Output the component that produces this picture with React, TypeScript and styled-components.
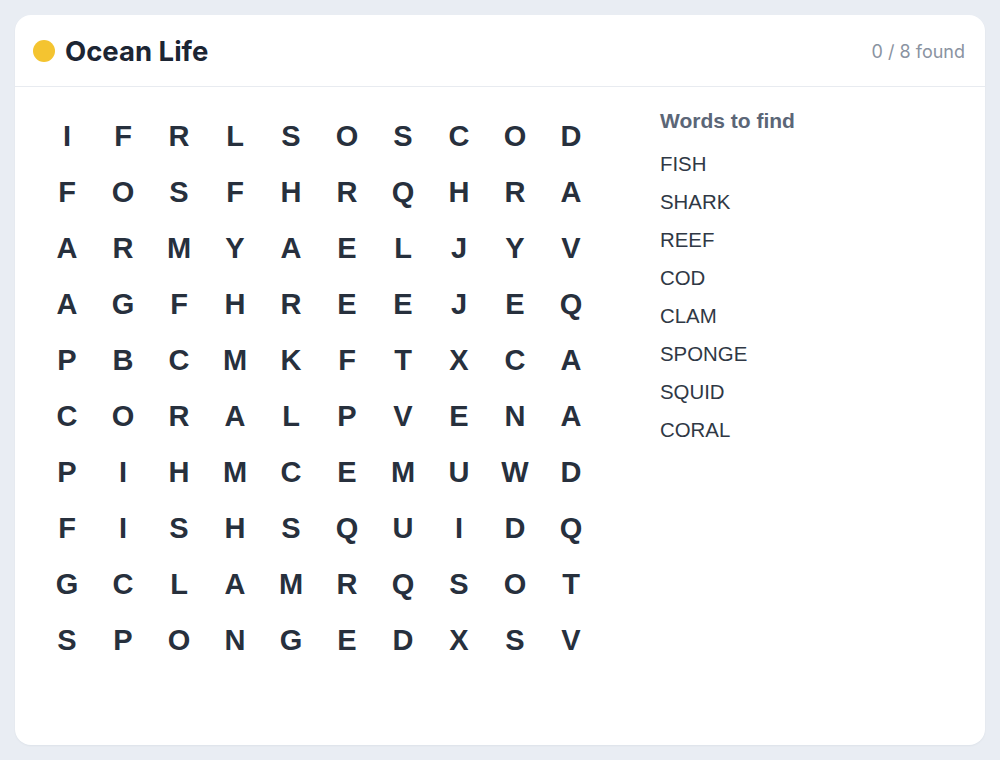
import styled, {createGlobalStyle} from 'styled-components';

const GlobalStyle = createGlobalStyle`
  html, body {
    margin: 0;
    padding: 0;
    background: #e9edf3;
    font-family: "Liberation Sans", Arial, sans-serif;
  }
`;

const grid = [
    'IFRLSOSCOD',
    'FOSFHRQHRA',
    'ARMYAELJYV',
    'AGFHREEJEQ',
    'PBCMKFTXCA',
    'CORALPVENA',
    'PIHMCEMUWD',
    'FISHSQUIDQ',
    'GCLAMRQSOT',
    'SPONGEDXSV',
];

const words = ['FISH', 'SHARK', 'REEF', 'COD', 'CLAM', 'SPONGE', 'SQUID', 'CORAL'];

export default function App() {
    return (
        <>
            <GlobalStyle/>
            <Page>
                <Card>
                    <Header>
                        <Title>
                            <Dot/>
                            Ocean Life
                        </Title>
                        <Counter>0 / {words.length} found</Counter>
                    </Header>
                    <Body>
                        <Grid>
                            {grid.map((row, r) =>
                                row.split('').map((ch, c) => <Cell key={`${r}-${c}`}>{ch}</Cell>)
                            )}
                        </Grid>
                        <Sidebar>
                            <SideTitle>Words to find</SideTitle>
                            <WordList>
                                {words.map(w => <Word key={w}>{w}</Word>)}
                            </WordList>
                        </Sidebar>
                    </Body>
                </Card>
            </Page>
        </>
    );
}

const Page = styled.div`
  padding: 15px;
  height: 760px;
  box-sizing: border-box;
`;

const Card = styled.div`
  background: #ffffff;
  border-radius: 16px;
  height: 730px;
  width: 970px;
  box-shadow: 0 1px 2px rgba(20, 30, 50, 0.05);
  overflow: hidden;
`;

const Header = styled.div`
  display: flex;
  align-items: center;
  justify-content: space-between;
  height: 71px;
  padding: 0 20px 0 18px;
  border-bottom: 1px solid #e8ebf0;
`;

const Title = styled.div`
  display: flex;
  align-items: center;
  gap: 10px;
  font-family: Inter, "Liberation Sans", sans-serif;
  font-weight: 700;
  font-size: 27.5px;
  color: #1c2533;
`;

const Dot = styled.span`
  width: 22px;
  height: 22px;
  border-radius: 50%;
  background: #f4c430;
`;

const Counter = styled.div`
  font-family: Inter, "Liberation Sans", sans-serif;
  font-size: 18px;
  color: #8a93a1;
  padding-top: 2px;
`;

const Body = styled.div`
  display: flex;
  padding: 21px 24px;
  gap: 61px;
`;

const Grid = styled.div`
  display: grid;
  grid-template-columns: repeat(10, 56px);
  grid-auto-rows: 56px;
`;

const Cell = styled.div`
  display: flex;
  align-items: center;
  justify-content: center;
  font-weight: 700;
  font-size: 29px;
  color: #27303d;
  user-select: none;
`;

const Sidebar = styled.div`
  display: flex;
  flex-direction: column;
`;

const SideTitle = styled.div`
  font-weight: 700;
  font-size: 21px;
  color: #5b6677;
  line-height: 24px;
  margin-top: 1px;
`;

const WordList = styled.div`
  display: flex;
  flex-direction: column;
  margin-top: 12px;
`;

const Word = styled.div`
  font-size: 20.4px;
  color: #2f3845;
  line-height: 38px;
`;
